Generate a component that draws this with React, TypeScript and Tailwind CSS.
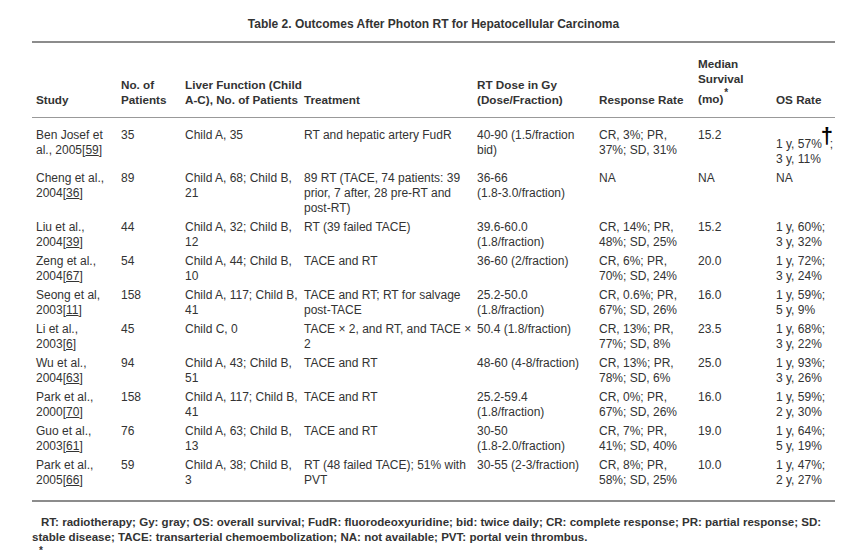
import React from "react";

type Row = {
  study: [string, string, string];
  n: string;
  liver: string[];
  treat: string[];
  dose: string[];
  resp: string[];
  med: string;
  os: string[];
};

const rows: Row[] = [
  { study: ["Ben Josef et", "al., 2005", "59"], n: "35", liver: ["Child A, 35"], treat: ["RT and hepatic artery FudR"], dose: ["40-90 (1.5/fraction", "bid)"], resp: ["CR, 3%; PR,", "37%; SD, 31%"], med: "15.2", os: [] },
  { study: ["Cheng et al.,", "2004", "36"], n: "89", liver: ["Child A, 68; Child B,", "21"], treat: ["89 RT (TACE, 74 patients: 39", "prior, 7 after, 28 pre-RT and", "post-RT)"], dose: ["36-66", "(1.8-3.0/fraction)"], resp: ["NA"], med: "NA", os: ["NA"] },
  { study: ["Liu et al.,", "2004", "39"], n: "44", liver: ["Child A, 32; Child B,", "12"], treat: ["RT (39 failed TACE)"], dose: ["39.6-60.0", "(1.8/fraction)"], resp: ["CR, 14%; PR,", "48%; SD, 25%"], med: "15.2", os: ["1 y, 60%;", "3 y, 32%"] },
  { study: ["Zeng et al.,", "2004", "67"], n: "54", liver: ["Child A, 44; Child B,", "10"], treat: ["TACE and RT"], dose: ["36-60 (2/fraction)"], resp: ["CR, 6%; PR,", "70%; SD, 24%"], med: "20.0", os: ["1 y, 72%;", "3 y, 24%"] },
  { study: ["Seong et al,", "2003", "11"], n: "158", liver: ["Child A, 117; Child B,", "41"], treat: ["TACE and RT; RT for salvage", "post-TACE"], dose: ["25.2-50.0", "(1.8/fraction)"], resp: ["CR, 0.6%; PR,", "67%; SD, 26%"], med: "16.0", os: ["1 y, 59%;", "5 y, 9%"] },
  { study: ["Li et al.,", "2003", "6"], n: "45", liver: ["Child C, 0"], treat: ["TACE \u00d7 2, and RT, and TACE \u00d7", "2"], dose: ["50.4 (1.8/fraction)"], resp: ["CR, 13%; PR,", "77%; SD, 8%"], med: "23.5", os: ["1 y, 68%;", "3 y, 22%"] },
  { study: ["Wu et al.,", "2004", "63"], n: "94", liver: ["Child A, 43; Child B,", "51"], treat: ["TACE and RT"], dose: ["48-60 (4-8/fraction)"], resp: ["CR, 13%; PR,", "78%; SD, 6%"], med: "25.0", os: ["1 y, 93%;", "3 y, 26%"] },
  { study: ["Park et al.,", "2000", "70"], n: "158", liver: ["Child A, 117; Child B,", "41"], treat: ["TACE and RT"], dose: ["25.2-59.4", "(1.8/fraction)"], resp: ["CR, 0%; PR,", "67%; SD, 26%"], med: "16.0", os: ["1 y, 59%;", "2 y, 30%"] },
  { study: ["Guo et al.,", "2003", "61"], n: "76", liver: ["Child A, 63; Child B,", "13"], treat: ["TACE and RT"], dose: ["30-50", "(1.8-2.0/fraction)"], resp: ["CR, 7%; PR,", "41%; SD, 40%"], med: "19.0", os: ["1 y, 64%;", "5 y, 19%"] },
  { study: ["Park et al.,", "2005", "66"], n: "59", liver: ["Child A, 38; Child B,", "3"], treat: ["RT (48 failed TACE); 51% with", "PVT"], dose: ["30-55 (2-3/fraction)"], resp: ["CR, 8%; PR,", "58%; SD, 25%"], med: "10.0", os: ["1 y, 47%;", "2 y, 27%"] },
];

function Lines({ lines }: { lines: string[] }) {
  return (
    <>
      {lines.map((l, i) => (
        <div key={i}>{l}</div>
      ))}
    </>
  );
}

const th = "align-bottom pl-[4px] pt-[13px] pb-[10px] font-bold text-[11.7px]";

export default function App() {
  const font = { fontFamily: '"Liberation Sans", Arial, sans-serif' };
  return (
    <div className="w-[850px] h-[550px] overflow-hidden bg-white text-[#333] text-[12px] leading-[15px]" style={font}>
      <div className="pt-[17px] pl-[32px] w-[835px] text-center font-bold">
        Table 2. Outcomes After Photon RT for Hepatocellular Carcinoma
      </div>
      <div className="ml-[32px] w-[803px] mt-[9px] border-t-2 border-[#8c8c8c]">
        <table className="table-fixed border-collapse w-[803px] whitespace-nowrap">
          <colgroup>
            <col className="w-[85px]" />
            <col className="w-[64px]" />
            <col className="w-[119px]" />
            <col className="w-[173px]" />
            <col className="w-[122px]" />
            <col className="w-[99px]" />
            <col className="w-[78px]" />
            <col className="w-[63px]" />
          </colgroup>
          <thead>
            <tr className="border-b border-[#999] text-left">
              <th className={th}>Study</th>
              <th className={th}>
                <div>No. of</div>
                <div>Patients</div>
              </th>
              <th className={th}>
                <div>Liver Function (Child</div>
                <div>A-C), No. of Patients</div>
              </th>
              <th className={th}>Treatment</th>
              <th className={th}>
                <div>RT Dose in Gy</div>
                <div>(Dose/Fraction)</div>
              </th>
              <th className={th}>Response Rate</th>
              <th className={th}>
                <div>Median</div>
                <div>Survival</div>
                <div className="mt-[5px]">
                  (mo)<span className="relative -top-[7px] text-[10px] ml-[1px]">*</span>
                </div>
              </th>
              <th className={th}>OS Rate</th>
            </tr>
          </thead>
          <tbody>
            {rows.map((r, i) => {
              const pad =
                i === 0 ? "pt-[10px] pb-[2px]" : i === rows.length - 1 ? "pt-[2px] pb-[12px]" : "py-[2px]";
              const td = `align-top pl-[4px] ${pad}`;
              return (
                <tr key={i}>
                  <td className={td}>
                    <div>{r.study[0]}</div>
                    <div>
                      {r.study[1]}[<span className="underline">{r.study[2]}</span>]
                    </div>
                  </td>
                  <td className={td}>{r.n}</td>
                  <td className={td}>
                    <Lines lines={r.liver} />
                  </td>
                  <td className={td}>
                    <Lines lines={r.treat} />
                  </td>
                  <td className={td}>
                    <Lines lines={r.dose} />
                  </td>
                  <td className={td}>
                    <Lines lines={r.resp} />
                  </td>
                  <td className={td}>{r.med}</td>
                  <td className={td}>
                    {i === 0 ? (
                      <div className="pt-[9px]">
                        <div>
                          1 y, 57%
                          <span className="relative inline-block w-[8px] h-[15px] align-top">
                            <span className="absolute -left-[1px] -top-[12px] text-[22px] leading-[22px] font-bold text-black">
                              {"\u2020"}
                            </span>
                          </span>
                          ;
                        </div>
                        <div>3 y, 11%</div>
                      </div>
                    ) : (
                      <Lines lines={r.os} />
                    )}
                  </td>
                </tr>
              );
            })}
          </tbody>
        </table>
      </div>
      <div className="ml-[32px] w-[803px] border-t-2 border-[#8c8c8c]" />
      <div className="ml-[32px] w-[803px] mt-[13px] font-bold text-[11.55px] indent-[9px]">
        RT: radiotherapy; Gy: gray; OS: overall survival; FudR: fluorodeoxyuridine; bid: twice daily; CR: complete
        response; PR: partial response; SD: stable disease; TACE: transarterial chemoembolization; NA: not available;
        PVT: portal vein thrombus.
      </div>
      <div className="ml-[32px] w-[803px] mt-[1px] font-bold text-[10px] leading-[10px] indent-[7px]">*</div>
    </div>
  );
}
